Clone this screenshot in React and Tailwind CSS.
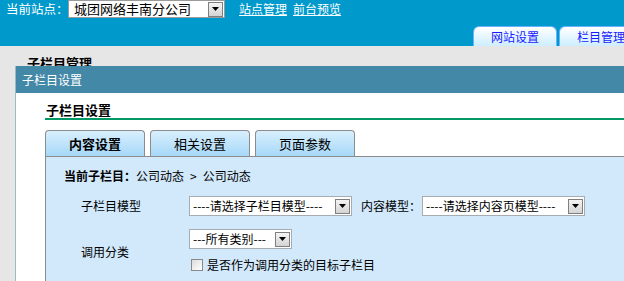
import React from "react";

const font = { fontFamily: '"SimSun", "Noto Sans CJK SC", sans-serif' };

const Arrow = () => (
    <span className="flex h-[15px] w-[15px] shrink-0 items-center justify-center border border-[#7f7f7f] bg-gradient-to-b from-[#f4f4f4] to-[#d4d4d4]">
        <svg width="7" height="4" viewBox="0 0 7 4">
            <path d="M0 0h7L3.5 4z" fill="#000" />
        </svg>
    </span>
);

const FakeSelect = ({ text, width }) => (
    <div
        className="flex h-[20px] shrink-0 items-center justify-between border border-[#a5acb2] bg-white pl-[3px] pr-[1px] text-[12px] leading-none text-black"
        style={{ width }}
    >
        <span className="whitespace-nowrap">{text}</span>
        <Arrow />
    </div>
);

const Tab = ({ label, active }) => (
    <div
        className={`flex h-[26px] w-[100px] items-center justify-center rounded-t-[4px] border border-b-0 border-[#8c8c8c] bg-gradient-to-b from-[#d8effd] to-[#a6d8f8] text-[13px] text-black ${
            active ? "font-bold" : ""
        }`}
    >
        {label}
    </div>
);

export default function App() {
    return (
        <div className="h-[281px] w-[624px] overflow-hidden bg-[#e6e6e6]" style={font}>
            {/* top bar */}
            <div className="flex h-[46px] justify-between bg-[#0099cc]">
                <div className="flex h-[18px] items-center whitespace-nowrap text-white">
                    <span className="ml-[6px] w-[62px] shrink-0 text-[12.5px]">当前站点：</span>
                    <div className="flex h-[18px] w-[157px] shrink-0 items-center justify-between border border-[#9a9a9a] bg-white pl-[5px] pr-[1px] text-[13px] text-black">
                        <span>城团网络丰南分公司</span>
                        <Arrow />
                    </div>
                    <a className="ml-[14px] text-[12px] underline">站点管理</a>
                    <a className="ml-[6px] text-[12px] underline">前台预览</a>
                </div>
                <div className="flex shrink-0 items-end gap-[2px] self-end whitespace-nowrap">
                    <div className="flex h-[20px] w-[84px] items-center justify-center rounded-t-[6px] border border-b-0 border-[#66b3ff] bg-gradient-to-b from-white to-[#cdeeff] text-[12px] text-[#1a1aff]">
                        网站设置
                    </div>
                    <div className="flex h-[20px] w-[65px] items-center justify-start overflow-hidden rounded-tl-[6px] border border-b-0 border-r-0 border-[#66b3ff] bg-gradient-to-b from-white to-[#cdeeff] pl-[17px] text-[12px] text-[#1a1aff]">
                        栏目管理
                    </div>
                </div>
            </div>

            {/* page heading, mostly hidden by the dialog */}
            <div className="h-[20px] overflow-hidden">
                <div className="pl-[27px] pt-[10px] text-[13px] font-bold leading-[14px] text-black">子栏目管理</div>
            </div>

            {/* dialog */}
            <div className="ml-[15px] border-l border-[#9bbacb] bg-white">
                <div className="flex h-[27px] items-center bg-[#4488a8] pl-[6px] text-[12px] text-white">子栏目设置</div>
                <div className="pl-[29px] pt-[10px]">
                    <div className="border-b-2 border-[#009966] pb-[1px] pl-[1px] text-[13px] font-bold leading-[14px] text-black">
                        子栏目设置
                    </div>
                    <div className="mt-[10px] flex gap-[5px]">
                        <Tab label="内容设置" active />
                        <Tab label="相关设置" />
                        <Tab label="页面参数" />
                    </div>
                    <div className="h-[140px] border-l border-t border-[#8c8c8c] bg-[#d2e9fb] text-[12px] text-black">
                        <div className="flex pl-[18px] pt-[12px] leading-[14px]">
                            <span className="font-bold">当前子栏目：</span>
                            <span>公司动态</span>
                            <span className="mx-[6px]">&gt;</span>
                            <span>公司动态</span>
                        </div>
                        <div className="mt-[13px] flex items-center whitespace-nowrap">
                            <span className="w-[143px] shrink-0 pl-[35px]">子栏目模型</span>
                            <FakeSelect text="----请选择子栏目模型----" width={163} />
                            <span className="ml-[9px] w-[61px] shrink-0">内容模型：</span>
                            <FakeSelect text="----请选择内容页模型----" width={163} />
                        </div>
                        <div className="mt-[13px] flex whitespace-nowrap">
                            <span className="w-[143px] shrink-0 pl-[35px] pt-[14px]">调用分类</span>
                            <div className="flex flex-col">
                                <FakeSelect text="---所有类别---" width={103} />
                                <label className="mt-[7px] flex items-center">
                                    <span className="ml-[2px] h-[12px] w-[12px] border border-[#8a8a8a] bg-gradient-to-br from-[#dcdcdc] to-white" />
                                    <span className="ml-[4px]">是否作为调用分类的目标子栏目</span>
                                </label>
                            </div>
                        </div>
                    </div>
                </div>
            </div>
        </div>
    );
}
